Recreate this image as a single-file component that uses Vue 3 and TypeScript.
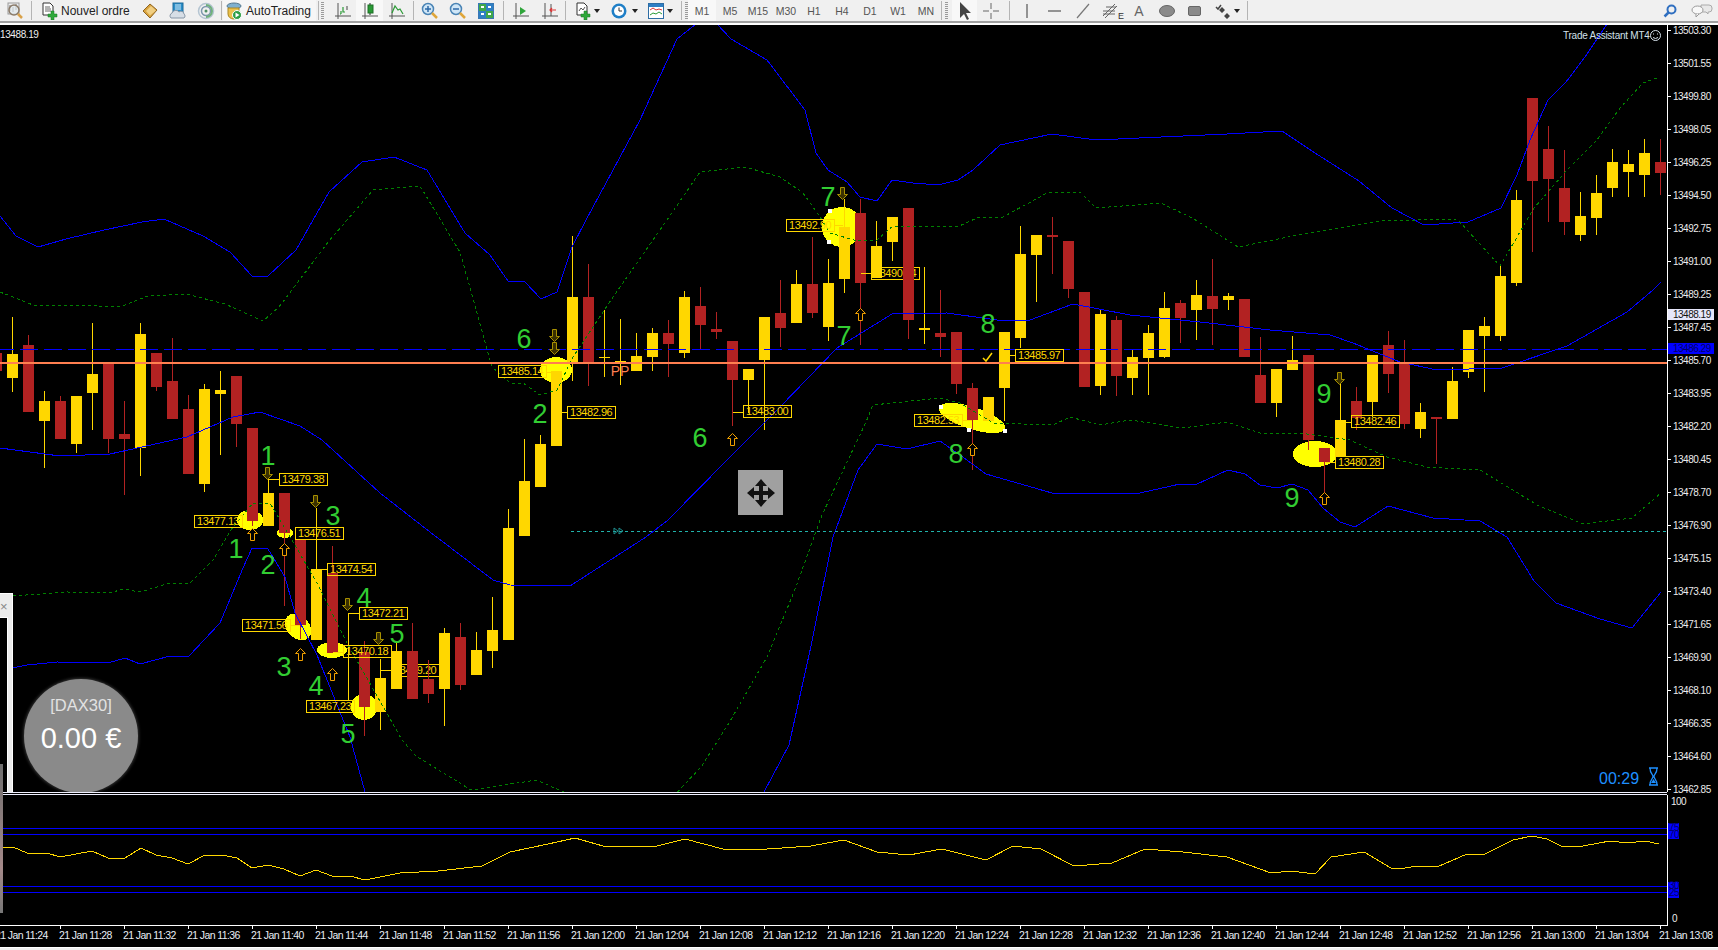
<template>
  <div class="terminal">
    <div class="toolbar">
      <button class="btn">
        <svg width="18" height="18" viewBox="0 0 18 18"><rect x="2" y="1" width="11" height="11" fill="#eee" stroke="#999" /><path d="M4 3v6M7 5v5M10 2v6" stroke="#777" /><circle cx="8" cy="8" r="5" fill="#dfe8ec" fill-opacity=".7" stroke="#8a7a68" stroke-width="1.5" /><path d="M12 12l4 4" stroke="#d9a24a" stroke-width="2.5" /></svg>
      </button>
      <i class="sep s1"></i>
      <button class="btn order">
        <svg width="16" height="18" viewBox="0 0 16 18"><path d="M1 1h7l3 3v9H1z" fill="#fff" stroke="#333" /><path d="M3 5h5M3 7h6M3 9h6" stroke="#666" /><path d="M6 12h3V9h3v3h3v3h-3v3H9v-3H6z" fill="#2ea83a" stroke="#1b7a26" stroke-width=".5" /></svg>
        <span>Nouvel ordre</span>
      </button>
      <button class="btn">
        <svg width="18" height="18" viewBox="0 0 18 18"><path d="M2 9l7-7 7 6-7 8z" fill="#d9a33e" stroke="#8f6520" /><path d="M5 9l5-5 5 4.500-6 5z" fill="#f0cf83" /></svg>
      </button>
      <button class="btn">
        <svg width="18" height="18" viewBox="0 0 18 18"><rect x="4" y="1" width="10" height="10" fill="#2a8ec9" stroke="#1d6a99" /><path d="M6 3h6M6 5h6M6 7h6" stroke="#d5ecf8" /><path d="M2 16a3 3 0 0 1 1-5 4 4 0 0 1 7-1 3 3 0 0 1 5 2 2.500 2.500 0 0 1 0 4z" fill="#d7dee6" stroke="#8796a6" /></svg>
      </button>
      <button class="btn">
        <svg width="18" height="18" viewBox="0 0 18 18" fill="none"><circle cx="9" cy="9" r="7.500" stroke="#b5c5d2" stroke-width="1.500" /><circle cx="9" cy="9" r="4.500" stroke="#7d98ad" stroke-width="1.500" /><path d="M9 3a6 6 0 0 1 0 12" stroke="#6fb07c" stroke-width="2" /><circle cx="9" cy="9" r="1.500" fill="#4d8f64" /></svg>
      </button>
      <i class="sep s2"></i>
      <button class="btn auto">
        <svg width="16" height="18" viewBox="0 0 16 18"><ellipse cx="8" cy="4" rx="7" ry="3" fill="#7fb0cf" stroke="#55788f" /><path d="M2 6h11v6c0 3-3 5-5.500 5S2 15 2 12z" fill="#ecc14a" stroke="#a98725" /><circle cx="11" cy="13" r="4.500" fill="#2d9e44" stroke="#fff" /><path d="M9.500 10.500l4 2.500-4 2.500z" fill="#fff" /></svg>
        <span>AutoTrading</span>
      </button>
      <i class="sep s3"></i>
      <i class="grip g1"></i>
      <button class="btn w27">
        <svg width="16" height="18" viewBox="0 0 16 18" fill="none"><path d="M3 1v16M0 14h16" stroke="#555" /><path d="M6 9v3M5 12h1M8 5v5h2" stroke="#2a9a35" stroke-width="1.200" /><path d="M12 4v4" stroke="#444" /></svg>
      </button>
      <button class="btn w27 active">
        <svg width="16" height="18" viewBox="0 0 16 18" fill="none"><path d="M3 1v16M0 14h16" stroke="#555" /><path d="M8 1v12" stroke="#222" /><rect x="6" y="3" width="5" height="8" fill="#2a9a35" stroke="#1c6f26" /></svg>
      </button>
      <button class="btn w27">
        <svg width="16" height="18" viewBox="0 0 16 18" fill="none"><path d="M3 1v16M0 14h16" stroke="#555" /><path d="M3 11l3-7 3 4 2-1 3 5" stroke="#2a9a35" stroke-width="1.200" /></svg>
      </button>
      <i class="sep s4"></i>
      <button class="btn">
        <svg width="18" height="18" viewBox="0 0 18 18"><circle cx="7" cy="7" r="5.500" fill="#cfe6f7" stroke="#4a84b5" stroke-width="1.500" /><path d="M4 7h6M7 4v6" stroke="#2c69a8" stroke-width="1.500" /><path d="M11 11l5 5" stroke="#dfa63a" stroke-width="2.500" /></svg>
      </button>
      <button class="btn">
        <svg width="18" height="18" viewBox="0 0 18 18"><circle cx="7" cy="7" r="5.500" fill="#cfe6f7" stroke="#4a84b5" stroke-width="1.500" /><path d="M4 7h6" stroke="#2c69a8" stroke-width="1.500" /><path d="M11 11l5 5" stroke="#dfa63a" stroke-width="2.500" /></svg>
      </button>
      <button class="btn">
        <svg width="16" height="18" viewBox="0 0 16 18"><rect x="0.500" y="1.500" width="15" height="15" fill="#fff" stroke="#3978b5" /><path d="M1 2h7v7H1z" fill="#3fa84b" /><path d="M8 2h7v7H8zM1 9h7v7H1z" fill="#2f7fc4" /><path d="M8 9h7v7H8z" fill="#3fa84b" /><path d="M3 5h3M10 5h3M3 12h3M10 12h3" stroke="#fff" stroke-width="2" /></svg>
      </button>
      <i class="sep s5"></i>
      <button class="btn">
        <svg width="16" height="18" viewBox="0 0 16 18" fill="none"><path d="M3 1v16M0 14h16" stroke="#555" /><path d="M7 5l6 4-6 4z" fill="#2fa53a" /></svg>
      </button>
      <button class="btn ml1">
        <svg width="16" height="18" viewBox="0 0 16 18" fill="none"><path d="M3 1v16M0 14h16M9 2v12" stroke="#555" /><path d="M14 8H8M10 6l-2 2 2 2" stroke="#d33" stroke-width="1.200" /></svg>
      </button>
      <i class="sep s6"></i>
      <button class="btn drop first">
        <svg width="16" height="18" viewBox="0 0 16 18"><path d="M2 1h7l3 3v9H2z" fill="#fff" stroke="#333" /><path d="M4 9l2-3 2 2 2-3" stroke="#555" fill="none" /><path d="M6 12h3V9h3v3h3v3h-3v3H9v-3H6z" fill="#2ea83a" stroke="#1b7a26" stroke-width=".5" /></svg>
        <i class="caret"></i>
      </button>
      <button class="btn drop wide">
        <svg width="16" height="18" viewBox="0 0 16 18"><circle cx="8" cy="9" r="7.500" fill="#1f7fc7" /><circle cx="8" cy="9" r="5" fill="#fff" /><path d="M8 5.500V9h3" stroke="#333" fill="none" /></svg>
        <i class="caret"></i>
      </button>
      <button class="btn drop">
        <svg width="16" height="18" viewBox="0 0 16 18"><rect x=".5" y="1.500" width="15" height="15" fill="#fff" stroke="#2e6da4" /><rect x="1" y="2" width="14" height="3" fill="#2f7fc4" /><path d="M2 8l3-2 3 2 3-1 3 1" stroke="#d33" fill="none" /><path d="M2 13l3-2 3 1 3-2 3 2" stroke="#2a9a35" fill="none" /></svg>
        <i class="caret"></i>
      </button>
      <i class="sep s7"></i>
      <i class="grip g2"></i>
      <button v-for="tf in timeframes" :key="tf" class="btn tf" :class="{ active: tf === 'M1' }">{{ tf }}</button>
      <i class="sep s8"></i>
      <i class="grip g3"></i>
      <button class="btn cursor active">
        <svg width="14" height="20" viewBox="0 0 14 20"><path d="M2 1v16l4-4 3 6 2-1-3-6h5z" fill="#444" /></svg>
      </button>
      <button class="btn">
        <svg width="18" height="18" viewBox="0 0 18 18"><path d="M9 1v6M9 11v6M1 9h6M11 9h6" stroke="#666" /></svg>
      </button>
      <i class="sep s9"></i>
      <button class="btn draw">
        <svg width="18" height="18" viewBox="0 0 18 18"><path d="M9 2v14" stroke="#555" stroke-width="1.200" /></svg>
      </button>
      <button class="btn">
        <svg width="18" height="18" viewBox="0 0 18 18"><path d="M2 9h13" stroke="#555" stroke-width="1.200" /></svg>
      </button>
      <button class="btn">
        <svg width="18" height="18" viewBox="0 0 18 18"><path d="M3 16L15 2" stroke="#777" stroke-width="1.200" /></svg>
      </button>
      <button class="btn fib">
        <svg width="18" height="18" viewBox="0 0 18 18" fill="none"><path d="M1 14L13 2M3 16L15 4M1 9h12M1 12h12M4 5h10" stroke="#666" /></svg>
        <b>E</b>
      </button>
      <button class="btn letter">A</button>
      <button class="btn">
        <svg width="18" height="18" viewBox="0 0 18 18"><ellipse cx="9" cy="9" rx="7.500" ry="5.500" fill="#8a8a8a" stroke="#666" /></svg>
      </button>
      <button class="btn">
        <svg width="18" height="18" viewBox="0 0 18 18"><rect x="2.500" y="4.500" width="12" height="9" rx="1.500" fill="#8a8a8a" stroke="#666" /></svg>
      </button>
      <button class="btn drop">
        <svg width="16" height="18" viewBox="0 0 16 18"><path d="M1 5l2 2 3-4" stroke="#444" stroke-width="1.500" fill="none" /><path d="M7 5l3 3-3 3-3-3zM12 11l3 3-3 3-3-3z" fill="#444" /></svg>
        <i class="caret"></i>
      </button>
      <i class="sep s10"></i>
      <div class="tool-right">
        <svg width="14" height="14" viewBox="0 0 14 14" fill="none"><circle cx="8.500" cy="5.500" r="4" stroke="#2f6fc0" stroke-width="2" /><path d="M5.500 8.500L1.500 12.500" stroke="#2f6fc0" stroke-width="2.500" /></svg>
        <svg width="22" height="15" viewBox="0 0 22 15"><path d="M10 2h8a3 3 0 0 1 3 3v1a3 3 0 0 1-3 3h-1v2l-2-2h-5z" fill="#e8e8e8" stroke="#aaa" /><ellipse cx="6.500" cy="7" rx="5.500" ry="4" fill="#f8f8f8" stroke="#999" /><path d="M5 11v3l3-3" fill="#f8f8f8" stroke="#999" /></svg>
      </div>
    </div>

    <div class="main-row">
      <div class="plot">
        <svg class="chart" width="1667" height="767" viewBox="0 25 1667 767">
          <g class="blobs" fill="#ffff00">
            <ellipse v-for="(b, i) in blobs" :key="i" :cx="b.x" :cy="b.y" :rx="b.rx" :ry="b.ry" :transform="`rotate(${b.rot} ${b.x} ${b.y})`" />
          </g>
          <g v-for="l in labels.filter((o) => o.under)" :key="l.text">
            <rect class="tag" :x="l.x + 0.5" :y="l.y + 0.5" width="48" height="12" />
            <text class="tag-text" :x="l.x + 3" :y="l.y + 10">{{ l.text }}</text>
          </g>
          <g v-for="(c, i) in candles" :key="i" :fill="c[0] === 'y' ? '#ffd700' : '#b22222'">
            <rect :x="candleX(i)" :y="c[1]" width="1" :height="c[4] - c[1]" />
            <rect :x="candleX(i) - 5" :y="c[2]" width="11" :height="c[3] - c[2]" />
          </g>
          <path class="wire" d="M268 493V479H279M320 569H327M349 613H359M333 652H343M381 670H392M439 664H444M349 700H354M562 412H567M733 412H743M861 273H871M1010 355H1015M1346 422H1351M835 225H843M291 625H300M963 420H972M1326 462H1335M547 372H556" />
          <polyline v-for="(pts, i) in blueBands" :key="'b' + i" class="band blue" :points="pts" />
          <polyline v-for="(pts, i) in greenBands" :key="'g' + i" class="band green" :points="pts" />
          <line class="hdash" x1="0" y1="349.500" x2="1667" y2="349.500" />
          <line class="horange" x1="0" y1="363" x2="1667" y2="363" />
          <line class="teal" x1="571" y1="531.500" x2="1667" y2="531.500" />
          <path d="M614 528l4 3-4 3zM619 528l4 3-4 3z" fill="none" stroke="#1f8f8f" />
          <g v-for="l in labels.filter((o) => !o.under)" :key="l.text">
            <rect class="tag" :x="l.x + 0.5" :y="l.y + 0.5" width="48" height="12" />
            <text class="tag-text" :x="l.x + 3" :y="l.y + 10">{{ l.text }}</text>
          </g>
          <rect v-for="(s, i) in handles" :key="'h' + i" :x="s[0]" :y="s[1]" width="4" height="4" fill="#fff" />
          <path v-for="(a, i) in downArrows" :key="'d' + i" class="arrow-down" :d="arrowPath(a[0], a[1], 1)" />
          <path v-for="(a, i) in upArrows" :key="'u' + i" class="arrow-up" :d="arrowPath(a[0], a[1], -1)" />
          <text v-for="(n, i) in numbers" :key="'n' + i" class="num" :x="n[1]" :y="n[2] + 10">{{ n[0] }}</text>
          <text class="pp" x="620" y="376">PP</text>
          <path d="M983 358l3 3 6-8" fill="none" stroke="#ffd700" stroke-width="1.500" />
          <text class="plain" x="0" y="38">13488.19</text>
          <text class="assistant" x="1563" y="39">Trade Assistant MT4</text>
          <g fill="none" stroke="#d8e4ee">
            <circle cx="1655.500" cy="35.500" r="5" />
            <path d="M1653 37.500q2.500 2 5 0M1653.500 33.500v1M1657.500 33.500v1" />
          </g>
          <text class="countdown" x="1599" y="784">00:29</text>
          <path d="M1649 768h9M1649 785h9M1650 768c0 6 3 6 3 8.500 0 2.500-3 2.500-3 8.500M1657 768c0 6-3 6-3 8.500 0 2.500 3 2.500 3 8.500" fill="none" stroke="#1e90ff" stroke-width="1.300" />
          <path d="M1651 783l2.500-4 2.500 4z" fill="#1e90ff" />
        </svg>
        <div class="dax">
          <span class="dax-name">[DAX30]</span>
          <span class="dax-value">0.00 €</span>
        </div>
        <div class="move">
          <svg width="32" height="32" viewBox="0 0 32 32"><path d="M16 2l6 7h-4v5h5v-4l7 6-7 6v-4h-5v5h4l-6 7-6-7h4v-5H9v4l-7-6 7-6v4h5V9h-4z" fill="#111" /></svg>
        </div>
        <div class="side-window"><span class="side-x">×</span><div class="side-inner"></div></div>
      </div>
      <svg class="axis price-axis" width="51" height="767" viewBox="1667 25 51 767">
        <line x1="1667.500" y1="25" x2="1667.500" y2="792" stroke="#fff" />
        <g v-for="(p, i) in prices" :key="p">
          <line x1="1667" :y1="priceY(i) + 0.5" x2="1671" :y2="priceY(i) + 0.5" stroke="#fff" />
          <text class="axis-text" x="1673" :y="priceY(i) + 4">{{ p }}</text>
        </g>
        <rect x="1668" y="309" width="46" height="11" fill="#e6e6fa" />
        <text class="axis-text dark" x="1673" y="318">13488.19</text>
        <rect x="1668" y="343" width="46" height="11" fill="#0000ff" />
        <text class="axis-text navy" x="1673" y="352">13486.29</text>
      </svg>
    </div>

    <div class="divider-row"><div class="divider"></div></div>

    <div class="sub-row">
      <svg class="chart" width="1667" height="130" viewBox="0 795 1667 130">
        <path class="level" d="M0 828.500H1667M0 834.500H1667M0 886.500H1667M0 892.500H1667" />
        <polyline class="rsi" :points="rsi" />
      </svg>
      <svg class="axis" width="51" height="130" viewBox="1667 795 51 130">
        <line x1="1667.500" y1="795" x2="1667.500" y2="925" stroke="#fff" />
        <text class="axis-text" x="1671" y="805">100</text>
        <text class="axis-text" x="1672" y="922">0</text>
        <rect x="1668" y="823" width="11" height="16" fill="#0000ff" />
        <rect x="1668" y="882" width="11" height="16" fill="#0000ff" />
        <text class="axis-text navy" x="1669" y="831">75</text>
        <text class="axis-text navy" x="1669" y="838">70</text>
        <text class="axis-text navy" x="1669" y="889">30</text>
        <text class="axis-text navy" x="1669" y="896">25</text>
      </svg>
    </div>

    <div class="time-row">
      <span v-for="t in times" :key="t" class="time-cell">{{ t }}</span>
    </div>
    <div class="status"></div>
    <div class="desktop-strip"></div>
  </div>
</template>

<script setup lang="ts">
type Candle = [string, number, number, number, number];

const timeframes = ["M1", "M5", "M15", "M30", "H1", "H4", "D1", "W1", "MN"];

// type, wick top, body top, body bottom, wick bottom; first bar is partly off the left edge
const candles: Candle[] = [
  ["r", 353, 353, 371, 375], ["y", 317, 354, 378, 392], ["r", 335, 345, 412, 412], ["y", 391, 401, 421, 468],
  ["r", 396, 401, 439, 439], ["y", 396, 396, 444, 453], ["y", 323, 374, 393, 430], ["r", 363, 363, 439, 453],
  ["r", 401, 434, 439, 495], ["y", 323, 334, 448, 476], ["r", 353, 353, 387, 391], ["r", 338, 381, 419, 419],
  ["r", 395, 409, 474, 474], ["y", 384, 389, 484, 492], ["y", 371, 390, 394, 455], ["r", 376, 376, 424, 447],
  ["r", 428, 428, 521, 526], ["y", 493, 493, 526, 526], ["r", 493, 493, 533, 606], ["r", 540, 540, 625, 639],
  ["y", 508, 569, 640, 640], ["r", 546, 573, 653, 653], ["y", 613, 620, 620, 700], ["r", 641, 652, 707, 736],
  ["y", 659, 678, 712, 730], ["y", 643, 651, 689, 689], ["r", 623, 651, 699, 699], ["r", 660, 679, 694, 703],
  ["y", 628, 633, 689, 726], ["r", 623, 637, 685, 690], ["y", 632, 650, 675, 675], ["y", 597, 630, 651, 668],
  ["y", 509, 528, 640, 640], ["y", 439, 481, 536, 536], ["y", 435, 444, 487, 487], ["y", 371, 371, 446, 446],
  ["y", 236, 297, 363, 381], ["r", 264, 297, 363, 386], ["y", 310, 357, 358, 377], ["y", 319, 361, 362, 385],
  ["y", 333, 356, 371, 371], ["y", 328, 333, 357, 371], ["r", 320, 333, 344, 377], ["y", 291, 297, 353, 358],
  ["r", 287, 306, 325, 349], ["r", 312, 329, 332, 339], ["r", 341, 341, 380, 426], ["y", 369, 369, 380, 413],
  ["y", 317, 317, 360, 430], ["r", 280, 313, 328, 347], ["y", 270, 284, 323, 323], ["r", 237, 284, 313, 318],
  ["y", 259, 283, 327, 341], ["y", 199, 227, 279, 293], ["r", 199, 213, 283, 345], ["y", 221, 246, 278, 278],
  ["y", 217, 217, 242, 261], ["r", 208, 208, 320, 339], ["y", 267, 328, 330, 344], ["r", 290, 333, 337, 357],
  ["r", 332, 332, 384, 394], ["r", 383, 388, 420, 470], ["y", 397, 397, 421, 421], ["y", 332, 332, 388, 421],
  ["y", 226, 254, 338, 348], ["y", 235, 235, 255, 302], ["r", 217, 235, 237, 274], ["r", 241, 241, 289, 298],
  ["r", 292, 292, 387, 387], ["y", 310, 314, 386, 395], ["r", 316, 320, 376, 396], ["y", 350, 357, 378, 395],
  ["y", 325, 333, 358, 395], ["y", 292, 308, 357, 358], ["r", 300, 303, 318, 343], ["y", 280, 295, 310, 340],
  ["r", 259, 296, 309, 345], ["y", 293, 296, 300, 310], ["r", 299, 299, 357, 357], ["r", 337, 375, 403, 403],
  ["y", 369, 369, 403, 417], ["y", 336, 360, 370, 370], ["r", 355, 355, 440, 450], ["r", 448, 448, 462, 493],
  ["y", 378, 420, 457, 457], ["r", 387, 401, 418, 430], ["y", 355, 355, 402, 417], ["r", 331, 345, 374, 393],
  ["r", 340, 364, 424, 429], ["y", 403, 412, 429, 438], ["r", 417, 417, 419, 464], ["y", 367, 381, 419, 419],
  ["y", 330, 330, 372, 378], ["y", 317, 326, 336, 392], ["y", 266, 276, 336, 341], ["y", 190, 200, 283, 286],
  ["r", 98, 98, 181, 252], ["r", 126, 149, 179, 222], ["r", 150, 188, 222, 235], ["y", 192, 216, 235, 241],
  ["y", 175, 193, 218, 235], ["y", 149, 162, 188, 197], ["y", 150, 164, 172, 197], ["y", 139, 153, 175, 197],
  ["r", 139, 162, 173, 195],
];

const candleX = (i: number) => 16 * i - 4;

const blueBands = [
  "0,216 16,236 38,247 66,239 104,230 142,222 164,219 203,236 230,252 252,276 268,276 296,250 329,192 362,162 394,157 427,170 465,233 490,255 508,281 525,282 541,299 557,292 572,247 586,220 640,120 677,39 696,24 717,24 731,39 767,60 805,110 816,153 828,170 847,182 860,197 877,201 892,180 913,183 938,185 958,180 973,170 1000,145 1052,134 1096,140 1161,137 1227,134 1282,131 1315,153 1359,181 1392,208 1424,225 1468,222 1501,208 1517,175 1530,140 1548,100 1566,82 1585,57 1607,24",
  "0,448 60,456 110,454 187,437 233,417 260,412 300,426 322,440 380,493 430,532 493,580 510,585 570,586 646,537 668,520 730,457 780,407 837,348 892,314 947,313 997,320 1030,320 1073,304 1130,315 1200,322 1270,330 1330,335 1353,343 1400,362 1437,370 1502,368 1567,346 1627,312 1653,290 1661,282",
  "12,668 27,665 57,662 108,663 125,658 140,664 170,656 189,656 220,623 243,568 252,548 268,549 285,577 295,613 317,655 350,737 365,792",
  "764,792 789,745 811,646 833,537 858,470 877,444 907,449 940,441 960,455 986,474 1052,493 1140,493 1180,484 1197,484 1228,470 1245,474 1260,485 1277,488 1292,484 1308,490 1323,508 1340,522 1355,527 1388,506 1433,518 1480,521 1507,537 1534,581 1556,603 1600,619 1632,628 1661,592",
];

const greenBands = [
  "0,292 33,305 77,305 120,307 148,296 186,294 225,304 263,321 279,307 329,241 373,190 420,186 460,252 492,367 510,383 523,383 540,395 557,390 573,357 613,297 667,220 700,172 745,167 780,177 803,193 820,217 830,233 857,241 877,240 893,226 957,227 977,218 1003,217 1047,193 1080,192 1096,208 1161,203 1194,219 1238,247 1293,236 1380,221 1457,219 1500,266 1534,208 1567,170 1597,140 1620,108 1643,83 1657,78",
  "13,596 67,592 110,593 123,589 140,592 170,583 190,583 213,560 233,527 253,503 270,503 290,537 317,583 347,643 402,740 416,756 471,790 537,780 561,791 620,815 670,800 701,767 729,723 767,657 794,592 822,515 866,422 873,405 940,398 960,403 993,423 1053,425 1070,417 1100,425 1130,420 1183,428 1227,422 1260,433 1300,433 1350,440 1387,457 1427,467 1480,470 1539,506 1583,524 1632,518 1661,493",
];

const blobs = [
  { x: 250, y: 520, rx: 13, ry: 10, rot: 0 },
  { x: 285, y: 533, rx: 8, ry: 5, rot: 0 },
  { x: 298, y: 627, rx: 15, ry: 11, rot: 45 },
  { x: 332, y: 650, rx: 15, ry: 8, rot: 0 },
  { x: 364, y: 707, rx: 13, ry: 13, rot: 0 },
  { x: 556, y: 370, rx: 16, ry: 13, rot: 0 },
  { x: 842, y: 227, rx: 20, ry: 20, rot: 0 },
  { x: 972, y: 418, rx: 35, ry: 11, rot: 18 },
  { x: 1315, y: 454, rx: 22, ry: 13, rot: 0 },
];

const handles = [[828, 209], [827, 240], [939, 405], [967, 428], [1003, 429]];

const labels = [
  { text: "13477.13", x: 194, y: 515 },
  { text: "13479.38", x: 279, y: 473 },
  { text: "13476.51", x: 295, y: 527 },
  { text: "13474.54", x: 327, y: 563 },
  { text: "13472.21", x: 359, y: 607 },
  { text: "13471.56", x: 242, y: 619 },
  { text: "13470.18", x: 343, y: 645 },
  { text: "13469.20", x: 391, y: 664, under: true },
  { text: "13467.23", x: 306, y: 700 },
  { text: "13485.14", x: 498, y: 365 },
  { text: "13482.96", x: 567, y: 406 },
  { text: "13483.00", x: 743, y: 405 },
  { text: "13492.90", x: 786, y: 219 },
  { text: "13490.34", x: 871, y: 267, under: true },
  { text: "13485.97", x: 1015, y: 349 },
  { text: "13482.53", x: 914, y: 414 },
  { text: "13482.46", x: 1351, y: 415 },
  { text: "13480.28", x: 1335, y: 456 },
];

const numbers: [string, number, number][] = [
  ["1", 268, 455], ["1", 236, 548], ["2", 268, 564], ["3", 333, 515], ["3", 284, 666], ["4", 364, 597],
  ["4", 316, 685], ["5", 397, 633], ["5", 348, 733], ["6", 524, 338], ["2", 540, 413], ["6", 700, 437],
  ["7", 828, 196], ["7", 844, 335], ["8", 988, 323], ["8", 956, 453], ["9", 1324, 393], ["9", 1292, 497],
];

const downArrows = [[267, 473], [315, 501], [347, 604], [378, 638], [554, 335], [554, 348], [842, 193], [1339, 378]];
const upArrows = [[252, 534], [284, 549], [300, 654], [332, 674], [732, 439], [860, 314], [972, 449], [1324, 498]];

// hollow arrow; dir 1 points down, -1 points up
function arrowPath(x: number, y: number, dir: number): string {
  const cx = x + 0.5;
  const cy = y + 0.5;
  const tip = cy + 6 * dir;
  const mid = cy + 1 * dir;
  const tail = cy - 6 * dir;
  return `M${cx} ${tip}L${cx + 5} ${mid}H${cx + 2}V${tail}H${cx - 2}V${mid}H${cx - 5}Z`;
}

const prices = [
  "13503.30", "13501.55", "13499.80", "13498.05", "13496.25", "13494.50", "13492.75", "13491.00",
  "13489.25", "13487.45", "13485.70", "13483.95", "13482.20", "13480.45", "13478.70", "13476.90",
  "13475.15", "13473.40", "13471.65", "13469.90", "13468.10", "13466.35", "13464.60", "13462.85",
];

const priceY = (i: number) => 30 + i * 33;

const rsi =
  "3,848 13,847 27,853 47,853 60,857 92,851 108,858 125,858 141,848 156,855 172,858 188,864 205,855 222,855 237,858 252,868 268,865 284,869 300,876 316,870 332,876 350,876 365,880 380,877 400,873 438,871 482,866 510,852 548,844 575,838 603,846 657,846 685,839 723,849 767,849 811,846 844,840 877,852 909,855 942,849 986,860 1013,846 1041,849 1074,866 1112,863 1145,849 1183,852 1227,857 1271,873 1291,871 1315,874 1331,857 1364,852 1391,868 1405,868 1417,866 1437,867 1467,854 1485,854 1513,840 1532,836 1547,839 1563,847 1583,846 1610,841 1627,843 1645,841 1659,844";

const times: string[] = [];
for (let m = 11 * 60 + 24; m <= 13 * 60 + 8; m += 4) {
  const mm = String(m % 60).padStart(2, "0");
  times.push(`21 Jan ${Math.floor(m / 60)}:${mm}`);
}
</script>

<style scoped>
.terminal {
  position: relative;
  width: 1718px;
  height: 950px;
  overflow: hidden;
  display: flex;
  flex-direction: column;
  background: #f0f0f0;
  font-family: "Liberation Sans", Arial, sans-serif;
}

.toolbar {
  flex: none;
  height: 21px;
  display: flex;
  align-items: stretch;
  padding-left: 1px;
  background: #f0f0f0;
  border-bottom: 2px solid #a0a0a0;
  box-shadow: 0 2px 0 #fff;
  margin-bottom: 2px;
  box-sizing: content-box;
}

.btn {
  flex: none;
  width: 28px;
  height: 21px;
  padding: 0;
  border: 0;
  background: none;
  display: flex;
  align-items: center;
  justify-content: center;
  font: inherit;
  color: #222;
}
.btn.w27 { width: 27px; }
.btn.ml1 { margin-left: 1px; }
.btn.active { background: #f8f8f8; }
.btn.order {
  width: 103px;
  padding-left: 9px;
  justify-content: flex-start;
  gap: 3px;
  font-size: 12px;
}
.btn.auto {
  width: 93px;
  padding-left: 3px;
  justify-content: flex-start;
  gap: 4px;
  font-size: 12px;
  background: #f6f6f6;
}
.btn.drop {
  width: 36px;
  padding-left: 6px;
  justify-content: flex-start;
  gap: 3px;
}
.btn.drop.wide { gap: 5px; width: 37px; }
.btn.draw { margin-left: 3px; }
.btn.tf {
  font-size: 10.5px;
  color: #555;
}
.btn.cursor {
  width: 25px;
  margin-left: 4px;
}
.btn.fib { position: relative; }
.btn.fib b {
  position: absolute;
  right: 1px;
  bottom: 0;
  font-size: 9px;
  font-weight: 400;
  color: #333;
}
.btn.letter {
  font-size: 14px;
  color: #666;
}

.caret {
  width: 0;
  height: 0;
  border-left: 3px solid transparent;
  border-right: 3px solid transparent;
  border-top: 4px solid #222;
}

.sep {
  flex: none;
  width: 1px;
  height: 19px;
  margin-top: 1px;
  background: #b4b4b4;
}
.s1 { margin: 1px 1px 0 2px; }
.s2 { margin: 1px 1px 0 1px; }
.s3 { margin: 1px 0 0 2px; }
.s4 { margin: 1px 2px 0 3px; }
.s5 { margin: 1px 3px 0 3px; }
.s6 { margin: 1px 3px 0 1px; }
.s7 { margin: 1px 0 0 3px; }
.s8 { margin: 1px 0 0 1px; }
.s9 { margin: 1px 0 0 4px; }
.s10 { margin: 1px 0 0 2px; }

.grip {
  flex: none;
  width: 3px;
  height: 17px;
  margin-top: 2px;
  background: repeating-linear-gradient(to bottom, #9a9a9a 0 1px, #f0f0f0 1px 2px);
}
.g1 { margin-left: 2px; margin-right: 5px; }
.g2 { margin-left: 3px; }
.g3 { margin-left: 3px; }

.tool-right {
  margin-left: auto;
  padding-right: 5px;
  display: flex;
  align-items: center;
  gap: 14px;
}

.main-row,
.sub-row {
  flex: none;
  display: flex;
  background: #000;
}

.plot {
  position: relative;
  width: 1667px;
  height: 767px;
  overflow: hidden;
}

.chart,
.axis {
  display: block;
  flex: none;
  background: #000;
}
.price-axis {
  position: relative;
  z-index: 1;
  overflow: visible;
}

.blobs,
.band,
.hdash,
.horange,
.teal,
.tag,
.wire,
.level,
.rsi {
  shape-rendering: crispEdges;
}

.band {
  fill: none;
  stroke-width: 1;
}
.blue { stroke: #0000ff; }
.green {
  stroke: #008000;
  stroke-dasharray: 3 3;
}

.hdash {
  stroke: #0000ff;
  stroke-width: 1;
  stroke-dasharray: 18 6;
  stroke-dashoffset: 4;
}
.horange {
  stroke: #ff7f50;
  stroke-width: 2;
}
.teal {
  stroke: #20b2aa;
  stroke-dasharray: 3 3;
}

.tag {
  fill: none;
  stroke: #ffd700;
}
.tag-text {
  font-size: 11px;
  letter-spacing: -0.45px;
  fill: #ffd700;
}
.wire {
  fill: none;
  stroke: #ffd700;
}

.arrow-down {
  fill: #3a3000;
  stroke: #a89000;
}
.arrow-up {
  fill: #000;
  stroke: #f0a000;
}

.num {
  font-size: 27px;
  fill: #32cd32;
  text-anchor: middle;
}
.pp {
  font-size: 14px;
  fill: #ff7f50;
  text-anchor: middle;
}
.plain {
  font-size: 10px;
  letter-spacing: -0.4px;
  fill: #eee;
}
.assistant {
  font-size: 10px;
  letter-spacing: -0.25px;
  fill: #d2e0ea;
}
.countdown {
  font-size: 16px;
  fill: #1e90ff;
}

.dax {
  position: absolute;
  left: 24px;
  top: 654px;
  width: 114px;
  height: 114px;
  border-radius: 50%;
  background: #8a8a8a;
  box-shadow: 0 0 3px 1px #333;
  display: flex;
  flex-direction: column;
  align-items: center;
  padding-top: 16px;
  box-sizing: border-box;
  color: #fff;
}
.dax-name {
  font-size: 16.5px;
  line-height: 20px;
  color: #e2e2e2;
}
.dax-value {
  margin-top: 4px;
  font-size: 29px;
  line-height: 38px;
}

.move {
  position: absolute;
  left: 738px;
  top: 445px;
  width: 45px;
  height: 45px;
  background: #a0a0a0;
  display: flex;
  align-items: center;
  justify-content: center;
}

.side-window {
  position: absolute;
  left: 0;
  top: 568px;
  width: 13px;
  height: 199px;
  box-sizing: border-box;
  background: #ececec;
  border-top: 1px solid #fff;
  border-right: 1px solid #fff;
}
.side-x {
  display: block;
  height: 23px;
  font-size: 13px;
  line-height: 25px;
  color: #888;
}
.side-inner {
  width: 7px;
  height: 175px;
  background: #000;
  border-top: 1px solid #fff;
  border-right: 1px solid #fff;
}

.axis-text {
  font-size: 10px;
  letter-spacing: -0.5px;
  fill: #ececec;
}
.axis-text.dark { fill: #111; }
.axis-text.navy { fill: #000066; }

.divider-row {
  flex: none;
  height: 3px;
  background: #000;
}
.divider {
  width: 1667px;
  height: 3px;
  box-sizing: border-box;
  border-top: 1px solid #f0f0ff;
  border-bottom: 1px solid #f0f0ff;
}

.level {
  fill: none;
  stroke: #0000ff;
}
.rsi {
  fill: none;
  stroke: #ffd700;
}

.time-row {
  flex: none;
  height: 22px;
  box-sizing: border-box;
  display: flex;
  overflow: hidden;
  background: #000;
}
.time-row::before {
  content: "";
  position: absolute;
  left: 0;
  width: 1668px;
  height: 1px;
  background: #fff;
}
.time-cell {
  flex: none;
  width: 64px;
  font-size: 10.5px;
  line-height: 12px;
  letter-spacing: -0.6px;
  color: #e8eef5;
  white-space: nowrap;
}
.time-cell:first-child { margin-left: -5px; }
.time-cell::before {
  content: "";
  display: block;
  width: 1px;
  height: 4px;
  margin-left: 1px;
  background: #fff;
}

.status {
  flex: none;
  height: 3px;
  border-top: 1px solid #fff;
  box-sizing: border-box;
  background: #f0f0f0;
}

.desktop-strip {
  position: absolute;
  left: 0;
  top: 764px;
  width: 3px;
  height: 149px;
  background: linear-gradient(#6f6f6f, #8d7d7d 40%, #a58a8a 70%, #777);
}
</style>

<style>
body { background: #000; }
</style>
